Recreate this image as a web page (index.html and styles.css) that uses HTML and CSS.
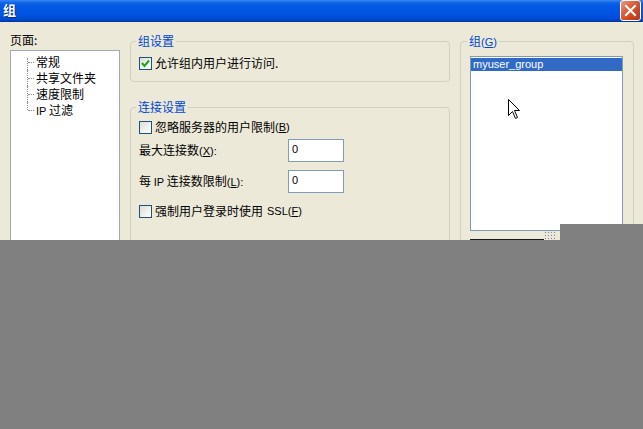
FILE: index.html
```html
<!DOCTYPE html>
<html>
<head>
<meta charset="utf-8">
<title>组</title>
<link rel="stylesheet" href="styles.css">
</head>
<body>
<div class="window">
  <div class="titlebar">
    <span class="title">组</span>
    <div class="close">
      <svg width="13" height="13" viewBox="0 0 13 13"><path d="M2 2 L11 11 M11 2 L2 11" stroke="#fff" stroke-width="2" stroke-linecap="square"/></svg>
    </div>
  </div>
  <div class="body">
    <div class="nav">
      <div class="nav-label">页面:</div>
      <div class="tree">
        <ul>
          <li>常规</li>
          <li>共享文件夹</li>
          <li>速度限制</li>
          <li><span class="lat">IP</span> 过滤</li>
        </ul>
      </div>
    </div>
    <div class="settings">
      <fieldset class="group g1">
        <legend>组设置</legend>
        <label class="check"><span class="box"><svg width="11" height="11" viewBox="0 0 11 11"><path d="M2 5 L4.5 8 L9 2.5" fill="none" stroke="#21A121" stroke-width="2"/></svg></span>允许组内用户进行访问.</label>
      </fieldset>
      <fieldset class="group g2">
        <legend>连接设置</legend>
        <label class="check"><span class="box"></span>忽略服务器的用户限制<span class="lat">(<u>B</u>)</span></label>
        <div class="field f1"><span class="flabel">最大连接数<span class="lat">(<u>X</u>):</span></span><span class="input">0</span></div>
        <div class="field f2"><span class="flabel">每 <span class="lat">IP</span> 连接数限制<span class="lat">(<u>L</u>):</span></span><span class="input">0</span></div>
        <label class="check c3"><span class="box"></span>强制用户登录时使用<span class="lat sp">SSL(<u>F</u>)</span></label>
      </fieldset>
    </div>
    <div class="groups">
      <fieldset class="group g3">
        <legend>组<span class="lat">(<u>G</u>)</span></legend>
        <div class="listbox"><div class="item sel">myuser_group</div></div>
        <div class="btnrow"><div class="btn"></div><div class="grip"></div></div>
      </fieldset>
    </div>
  </div>
  <svg class="cursor" width="13" height="21" viewBox="0 0 13 21"><path d="M0.5 0.5 L0.5 16.5 L4.5 12.5 L7.5 19.5 L9.5 18.5 L6.5 11.5 L11.5 11.5 Z" fill="#fff" stroke="#000" stroke-width="1"/></svg>
  <div class="shade shade-bottom"></div>
  <div class="shade shade-right"></div>
</div>
</body>
</html>
```
FILE: styles.css
```css
html, body {
  margin: 0;
  padding: 0;
}
body {
  background: #ECE9D8;
  font-family: "Noto Sans CJK SC", sans-serif;
  font-size: 12px;
  line-height: 14px;
  color: #000;
  overflow: hidden;
}
.lat {
  font-family: "Liberation Sans", "Noto Sans CJK SC", sans-serif;
  font-size: 11px;
}
.sp {
  margin-left: 4px;
}
.window {
  position: relative;
  width: 643px;
  height: 429px;
  overflow: hidden;
}
.titlebar {
  height: 22px;
  display: flex;
  align-items: flex-start;
  justify-content: space-between;
  padding: 0 1px 0 3px;
  background: linear-gradient(#3A87F2 0px, #0C62E6 3px, #0257E4 7px, #0054E2 14px, #004BD4 19px, #003DB4 21px, #00369F 22px);
}
.title {
  color: #fff;
  font-weight: bold;
  font-size: 13px;
  line-height: 20px;
  text-shadow: 1px 1px 0 #0A2C80;
}
.close {
  width: 21px;
  height: 21px;
  box-sizing: border-box;
  border: 1px solid #fff;
  border-radius: 3px;
  background: linear-gradient(135deg, #EC9C84 0%, #DA5E3C 40%, #C9461F 70%, #B5361A 100%);
  display: flex;
  align-items: center;
  justify-content: center;
  margin-right: 1px;
}
.body {
  display: flex;
  padding: 11px 0 0 10px;
}
.nav {
  width: 110px;
  flex: none;
}
.nav-label {
  height: 14px;
  margin-bottom: 3px;
}
.tree {
  height: 240px;
  border: 1px solid #9FA9B8;
  background: #fff;
}
.tree ul {
  list-style: none;
  margin: 0;
  padding: 3px 0 0 25px;
}
.tree li {
  position: relative;
  height: 16px;
  line-height: 16px;
}
.tree li::before {
  content: "";
  position: absolute;
  left: -9px;
  top: 0;
  height: 16px;
  border-left: 1px dotted #8A8A8A;
}
.tree li:first-child::before {
  top: 4px;
  height: 12px;
}
.tree li:last-child::before {
  height: 8px;
}
.tree li::after {
  content: "";
  position: absolute;
  left: -8px;
  top: 8px;
  width: 6px;
  border-top: 1px dotted #8A8A8A;
}
.settings {
  width: 320px;
  margin-left: 10px;
  flex: none;
}
.groups {
  width: 174px;
  margin-left: 10px;
  flex: none;
}
fieldset.group {
  margin: 1px 0 0 0;
  border: 1px solid #D0D0BF;
  border-radius: 4px;
  padding: 0 8px;
  min-width: 0;
}
fieldset.group legend {
  color: #0046D5;
  padding: 0 2px;
  margin-left: -3px;
  line-height: 14px;
}
.g1 {
  padding-top: 8px !important;
  padding-bottom: 11px !important;
}
.g2 {
  margin-top: 18px !important;
  padding-top: 6px !important;
  padding-bottom: 40px !important;
}
.check {
  display: flex;
  align-items: center;
  height: 14px;
}
.box {
  width: 13px;
  height: 13px;
  box-sizing: border-box;
  border: 1px solid #1C5180;
  background: linear-gradient(135deg, #DCDCD5 0%, #F2F2EE 60%, #FFFFFF 100%);
  margin-right: 3px;
  display: flex;
  align-items: center;
  justify-content: center;
  flex: none;
}
.field {
  display: flex;
  align-items: center;
  height: 23px;
}
.f1 { margin-top: 5px; }
.f2 { margin-top: 8px; }
.c3 { margin-top: 11px; }
.flabel {
  width: 149px;
  flex: none;
}
.input {
  width: 56px;
  height: 23px;
  box-sizing: border-box;
  border: 1px solid #7F9DB9;
  background: #fff;
  padding: 2px 3px;
  font-family: "Liberation Sans", sans-serif;
  font-size: 11px;
  line-height: 14px;
}
.g3 {
  padding: 7px 0 0 9px !important;
  height: 230px;
}
.listbox {
  width: 153px;
  height: 175px;
  box-sizing: border-box;
  border: 1px solid #7F9DB9;
  background: #fff;
  padding: 1px 0 0 0;
}
.item {
  height: 13px;
  line-height: 13px;
  padding-left: 2px;
  font-family: "Liberation Sans", sans-serif;
  font-size: 11px;
}
.item.sel {
  background: #316AC5;
  color: #fff;
}
.btnrow {
  display: flex;
  align-items: flex-start;
  margin-top: 0;
}
.btn {
  width: 74px;
  height: 20px;
  margin-top: 8px;
  box-sizing: border-box;
  border-top: 1px solid #1A1A1A;
  background: #F4F3EE;
}
.grip {
  width: 12px;
  height: 9px;
  background-image: radial-gradient(#8C8C84 40%, transparent 45%);
  background-size: 3px 3px;
  background-color: #E8E6DA;
}
.cursor {
  position: absolute;
  left: 508px;
  top: 99px;
}
.shade {
  position: absolute;
  background: #808080;
}
.shade-bottom {
  left: 0;
  top: 240px;
  width: 643px;
  height: 189px;
}
.shade-right {
  left: 560px;
  top: 224px;
  width: 83px;
  height: 16px;
}
```
